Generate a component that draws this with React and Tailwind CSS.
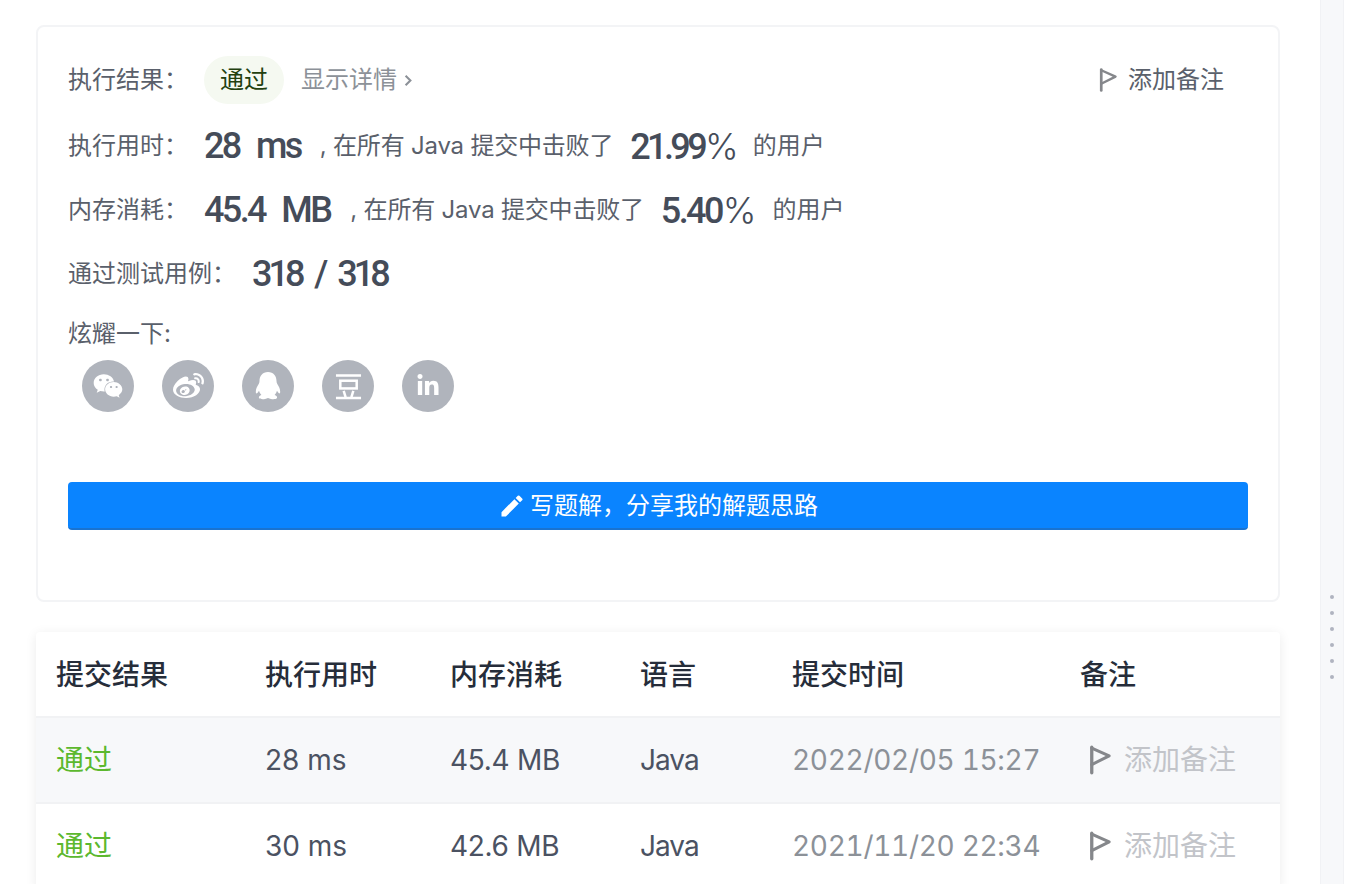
import React from "react";
import { FaWeixin, FaWeibo, FaLinkedinIn } from "react-icons/fa";
import { MdEdit } from "react-icons/md";

const Flag = ({ className }) => (
  <svg viewBox="0 0 24 32" className={className} fill="none" stroke="currentColor" strokeLinejoin="round" strokeLinecap="round">
    <path d="M3 2v28" strokeWidth="3.6" />
    <path d="M3 3 L22 11.5 L3 21" strokeWidth="3.2" />
  </svg>
);

const Douban = () => (
  <svg viewBox="0 0 28 28" className="w-[27px] h-[27px]" fill="none" stroke="white" strokeWidth="2.6">
    <path d="M1 2.5h26M1 26h26" />
    <rect x="5.5" y="8" width="17" height="8" />
    <path d="M9 18.5l2 6.5M19 18.5l-2 6.5" />
  </svg>
);

const Penguin = () => (
  <svg viewBox="0 0 28 30" className="w-[28px] h-[30px]" fill="white">
    <path d="M14 1c-5.5 0-8.5 4-8.5 9 0 1-.2 2-.8 3C3 15.5 1.8 18 1.8 21c0 1.5.8 1.8 1.8.8.6-.6 1-1.2 1.4-2 .4 1.6 1.2 3 2.4 4.2C5.6 24.6 4.5 25.8 5 27c.6 1.2 3.6 1.4 6 1 1.2-.2 2.2-.8 3-1 .8.2 1.8.8 3 1 2.4.4 5.4.2 6-1 .5-1.2-.6-2.4-2.4-3 1.2-1.2 2-2.6 2.4-4.2.4.8.8 1.4 1.4 2 1 1 1.8.7 1.8-.8 0-3-1.2-5.5-2.9-8-.6-1-.8-2-.8-3 0-5-3-9-8.5-9z" />
  </svg>
);

const Circle = ({ children }) => (
  <div className="w-[52px] h-[52px] rounded-full bg-[#b0b4bc] text-white flex items-center justify-center">{children}</div>
);

const Big = ({ children, className = "" }) => (
  <span className={`font-['Roboto',sans-serif] font-medium text-[36px] text-[#454c59] ${className}`}>{children}</span>
);

const Pct = () => (
  <span className="font-['Inter',sans-serif] font-light text-[36px] tracking-normal text-[#454c59] ml-[1px]">%</span>
);

const Cols = "grid grid-cols-[229px_185px_190px_152px_288px_200px] items-center";

const Row = ({ time, mem, date, bg }) => (
  <div className={`${Cols} h-[86px] border-t-2 border-[#f1f2f4] text-[28px] text-[#4b5262] ${bg}`}>
    <div className="pl-[20px] text-[#5cb82e]">通过</div>
    <div>{time}</div>
    <div className="tracking-[-0.3px]">{mem}</div>
    <div className="tracking-[-1px]">Java</div>
    <div className="text-[#8c9198] tabular-nums tracking-[-0.3px] whitespace-nowrap">{date}</div>
    <div className="flex items-center pl-[9px] text-[#c2c4c9]">
      <Flag className="w-[22px] h-[30px] text-[#85878b] mr-[13px]" />
      <span>添加备注</span>
    </div>
  </div>
);

const Rest = ({ children, className = "" }) => <span className={`tracking-[-0.2px] ${className}`}>{children}</span>;

export default function App() {
  return (
    <div className="w-[1358px] h-[884px] overflow-hidden flex bg-white font-['Inter','Noto_Sans_CJK_SC',sans-serif] font-normal">
      <main className="w-[1320px] shrink-0 pl-[36px] pr-[40px] pt-[25px]">
        <section className="h-[577px] rounded-[8px] border-2 border-[#f3f4f6] pl-[30px] pr-[30px] pt-[29px] text-[24px] text-[#5a606b]">
          <div className="flex items-center h-[48px]">
            <span className="w-[136px]">执行结果：</span>
            <span className="w-[80px] h-[48px] rounded-full bg-[#f5f9f1] text-[#23400f] flex items-center justify-center">通过</span>
            <span className="ml-[17px] text-[#8c9198]">显示详情</span>
            <svg viewBox="0 0 10 16" className="w-[8px] h-[13px] ml-[7px] text-[#8c9198]" fill="none" stroke="currentColor" strokeWidth="2.6"><path d="M2 2l6 6-6 6" /></svg>
            <div className="ml-auto mr-[24px] flex items-center">
              <Flag className="w-[18px] h-[24px] text-[#85878b] mr-[11px]" />
              <span>添加备注</span>
            </div>
          </div>
          <div className="flex items-center h-[48px] mt-[18px] whitespace-nowrap">
            <span className="w-[136px]">执行用时：</span>
            <Big className="tracking-[-2.6px] [word-spacing:10px]">28 ms</Big>
            <Rest className="ml-[19px]">, 在所有 Java 提交中击败了</Rest>
            <Big className="ml-[17px] tracking-[-3.6px]">21.99<Pct /></Big>
            <span className="ml-[14px]">的用户</span>
          </div>
          <div className="flex items-center h-[48px] mt-[16px] whitespace-nowrap">
            <span className="w-[136px]">内存消耗：</span>
            <Big className="tracking-[-2.6px] [word-spacing:10px]">45.4 MB</Big>
            <Rest className="ml-[20px]">, 在所有 Java 提交中击败了</Rest>
            <Big className="ml-[17px] tracking-[-2.6px]">5.40<Pct /></Big>
            <span className="ml-[16px]">的用户</span>
          </div>
          <div className="flex items-center h-[48px] mt-[16px] whitespace-nowrap">
            <span className="w-[184px]">通过测试用例：</span>
            <Big className="tracking-[-4px] [word-spacing:8px]">318 / 318</Big>
          </div>
          <div className="h-[32px] leading-[32px] mt-[20px]">炫耀一下:</div>
          <div className="flex gap-[28px] pl-[14px] mt-[10px]">
            <Circle><FaWeixin className="w-[30px] h-[30px]" /></Circle>
            <Circle><FaWeibo className="w-[31px] h-[31px]" /></Circle>
            <Circle><Penguin /></Circle>
            <Circle><Douban /></Circle>
            <Circle><FaLinkedinIn className="w-[24px] h-[24px]" /></Circle>
          </div>
          <button className="mt-[70px] w-[1180px] h-[48px] pt-[2px] rounded-[4px] bg-[#0a84ff] border-b-2 border-[#1a73d0] text-white flex items-center justify-center">
            <MdEdit className="w-[28px] h-[28px] mr-[4px]" />
            写题解，分享我的解题思路
          </button>
        </section>
        <section className="mt-[30px] shadow-[0_2px_12px_rgba(0,0,0,0.08)] rounded-t-[4px] bg-white">
          <div className={`${Cols} h-[84px] pt-[2px] text-[28px] font-medium text-[#262d3a]`}>
            <div className="pl-[20px]">提交结果</div>
            <div>执行用时</div>
            <div>内存消耗</div>
            <div>语言</div>
            <div>提交时间</div>
            <div>备注</div>
          </div>
          <Row time="28 ms" mem="45.4 MB" date="2022/02/05 15:27" bg="bg-[#f7f8fa]" />
          <Row time="30 ms" mem="42.6 MB" date="2021/11/20 22:34" bg="bg-white" />
        </section>
      </main>
      <aside className="w-[24px] h-full bg-[#f7f8fa] border-x border-[#f1f2f5] flex flex-col items-center gap-[12px] pt-[595px]">
        {[0, 1, 2, 3, 4, 5].map((i) => (
          <span key={i} className="w-[4px] h-[4px] rounded-full bg-[#b0b4c0]" />
        ))}
      </aside>
    </div>
  );
}
